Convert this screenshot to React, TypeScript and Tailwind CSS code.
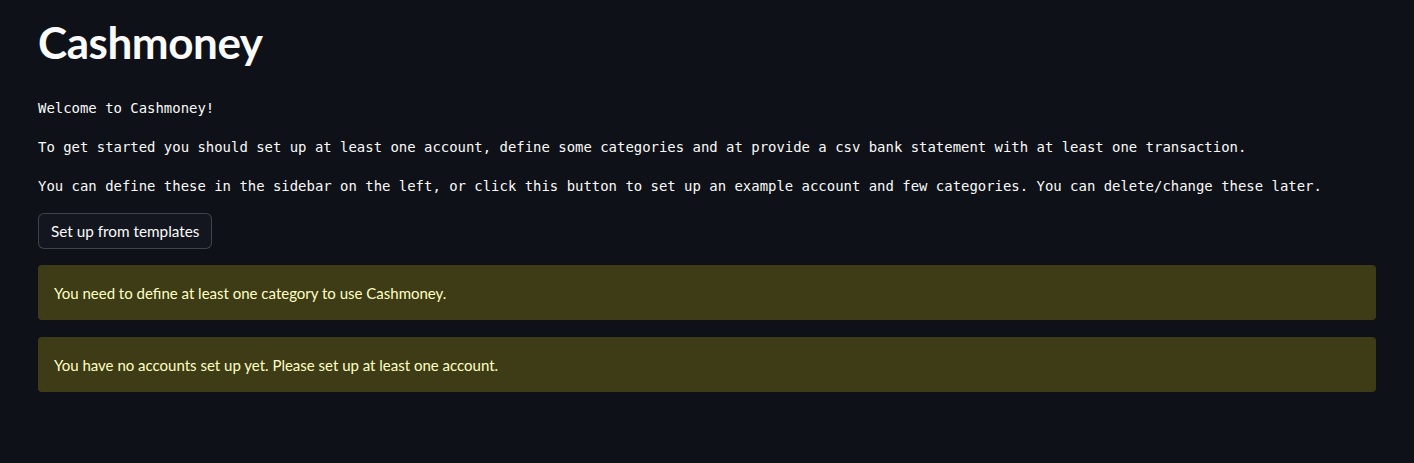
export default function App() {
  const lines = [
    'Welcome to Cashmoney!',
    'To get started you should set up at least one account, define some categories and at provide a csv bank statement with at least one transaction.',
    'You can define these in the sidebar on the left, or click this button to set up an example account and few categories. You can delete/change these later.',
  ];
  const warnings = [
    'You need to define at least one category to use Cashmoney.',
    'You have no accounts set up yet. Please set up at least one account.',
  ];

  return (
    <div className="min-h-[463px] w-full bg-[#0e1117] text-[#fafafa] px-[38px] pt-[12px] font-['Lato',sans-serif]">
      <h1 className="text-[44px] font-bold leading-[60px] tracking-[-0.01em]">Cashmoney</h1>

      <div className="mt-[27px] flex flex-col gap-[21px] font-['DejaVu_Sans_Mono',monospace] text-[13.95px] leading-[18px]">
        {lines.map((l, i) => (
          <p key={i} className="whitespace-pre">{l}</p>
        ))}
      </div>

      <button className="mt-[18px] h-[36px] px-[12px] rounded-[6px] border border-[#fafafa33] bg-[#13161e] text-[15.3px] text-[#fafafa]">
        Set up from templates
      </button>

      <div className="mt-[16px] flex flex-col gap-[17px]">
        {warnings.map((w, i) => (
          <div key={i} className="h-[55px] flex items-center px-[16px] pt-[1px] rounded-[4px] bg-[#3e3b17] text-[#ffffc2] text-[15px]">
            {w}
          </div>
        ))}
      </div>
    </div>
  );
}
